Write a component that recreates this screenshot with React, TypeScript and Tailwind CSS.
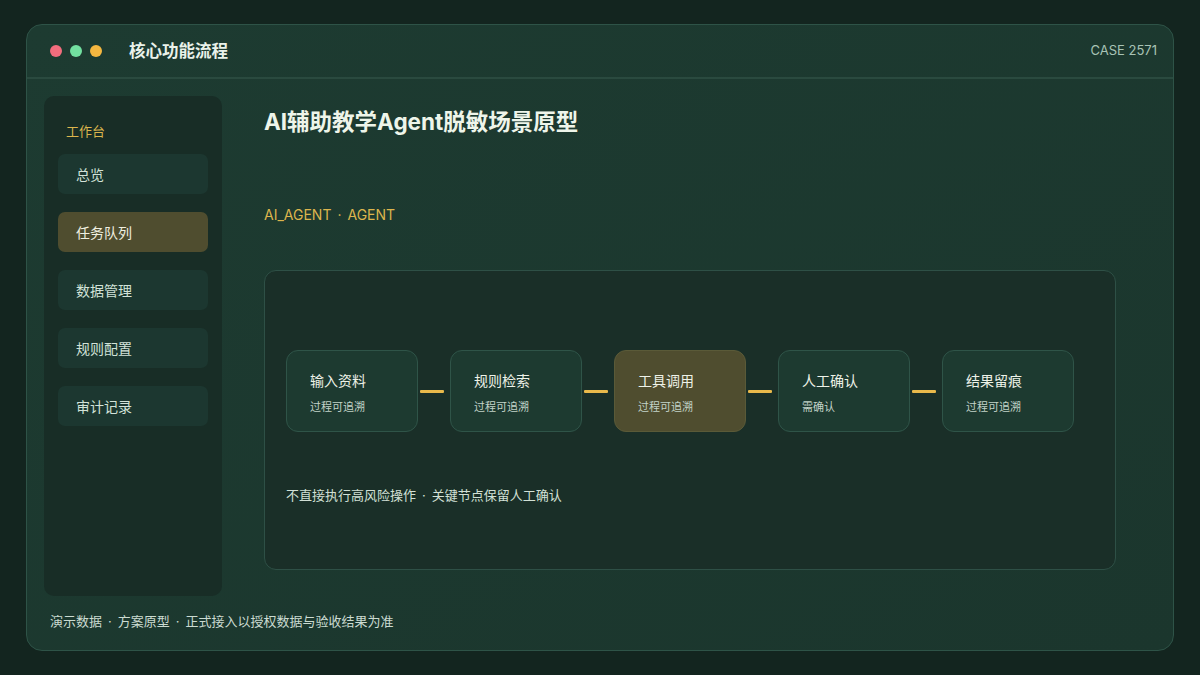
import React from "react";

const nav = ["总览", "任务队列", "数据管理", "规则配置", "审计记录"];
const steps = [
  { t: "输入资料", s: "过程可追溯" },
  { t: "规则检索", s: "过程可追溯" },
  { t: "工具调用", s: "过程可追溯", active: true },
  { t: "人工确认", s: "需确认" },
  { t: "结果留痕", s: "过程可追溯" },
];

function Dot() {
  return <span className="mx-[6px]">·</span>;
}

export default function App() {
  return (
    <div
      className="w-[1200px] h-[675px] bg-[#13251f] pt-[24px] pl-[26px]"
      style={{ fontFamily: 'Inter, "Noto Sans CJK SC", sans-serif' }}
    >
      <div className="w-[1148px] h-[627px] rounded-[16px] border border-[#2e5347] bg-gradient-to-br from-[#1d3b31] to-[#1b362d] flex flex-col">
        <div className="h-[54px] shrink-0 border-b-2 border-[#2a4a3f] flex items-center pl-[23px] pr-[16px]">
          <div className="flex items-center gap-[8px]">
            <span className="w-[12px] h-[12px] rounded-full bg-[#f26d7d]" />
            <span className="w-[12px] h-[12px] rounded-full bg-[#72e0a0]" />
            <span className="w-[12px] h-[12px] rounded-full bg-[#f4b740]" />
          </div>
          <div className="ml-[27px] text-[16.5px] font-bold text-[#eaf2ea]">核心功能流程</div>
          <div className="ml-auto text-[13px] text-[#a8c3b5]">CASE 2571</div>
        </div>
        <div className="flex pt-[17px] pl-[17px] gap-[42px]">
          <div className="w-[178px] h-[500px] rounded-[10px] bg-[#182d26] pt-[26px] px-[14px]">
            <div className="pl-[8px] text-[13px] text-[#dcb54d] leading-[18px]">工作台</div>
            <div className="mt-[14px] flex flex-col gap-[18px]">
              {nav.map((n) => (
                <div
                  key={n}
                  className={
                    "h-[40px] rounded-[7px] flex items-center pl-[18px] text-[14px] " +
                    (n === "任务队列"
                      ? "bg-[#4f4d2f] text-[#efefe0]"
                      : "bg-[#1c3730] text-[#d2e2d8]")
                  }
                >
                  {n}
                </div>
              ))}
            </div>
          </div>
          <div className="w-[852px] pt-[11px]">
            <div className="text-[22.5px] font-bold text-[#eef5ea] leading-[30px]">
              AI辅助教学Agent脱敏场景原型
            </div>
            <div className="mt-[68px] text-[14px] text-[#dcb54d] leading-[20px]">
              AI_AGENT<Dot />AGENT
            </div>
            <div className="mt-[45px] h-[300px] rounded-[12px] border border-[#2e5046] bg-[#1a2f28] pt-[79px] px-[21px]">
              <div className="flex items-center">
                {steps.map((s, i) => (
                  <React.Fragment key={s.t}>
                    <div
                      className={
                        "w-[132px] h-[82px] rounded-[12px] border pl-[23px] pt-[20px] " +
                        (s.active
                          ? "bg-[#4f4d2f] border-[#5a5a38]"
                          : "bg-[#1d3a30] border-[#2f5448]")
                      }
                    >
                      <div className="text-[14px] leading-[20px] text-[#eef2e8]">{s.t}</div>
                      <div className="mt-[9px] text-[11px] leading-[14px] text-[#c2d3c8]">{s.s}</div>
                    </div>
                    {i < steps.length - 1 && (
                      <div className="w-[24px] h-[3px] ml-[2px] mr-[6px] bg-[#e9b94b] rounded-[1px]" />
                    )}
                  </React.Fragment>
                ))}
              </div>
              <div className="mt-[54px] text-[13px] leading-[18px] text-[#d2e0d6]">
                不直接执行高风险操作<Dot />关键节点保留人工确认
              </div>
            </div>
          </div>
        </div>
        <div className="mt-[16px] pl-[23px] text-[13px] leading-[18px] text-[#cbdbd1]">
          演示数据<Dot />方案原型<Dot />正式接入以授权数据与验收结果为准
        </div>
      </div>
    </div>
  );
}
